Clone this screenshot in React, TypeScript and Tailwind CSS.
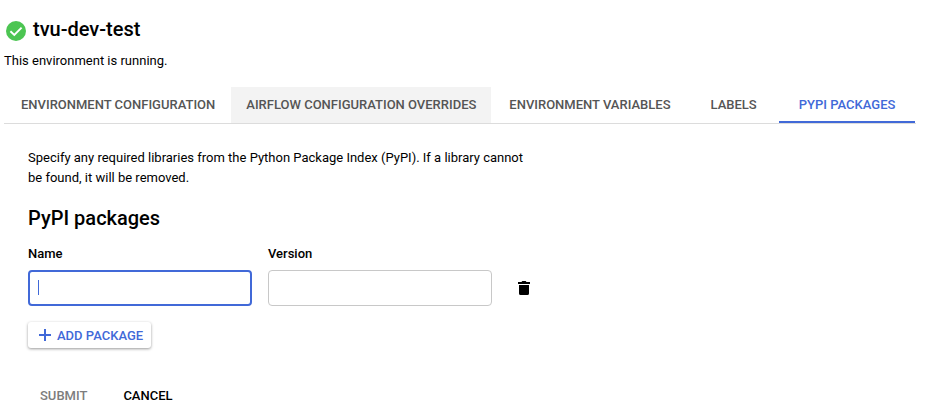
import { useState } from "react";

const tabs = [
  { label: "ENVIRONMENT CONFIGURATION", pad: "pl-[17px] pr-4" },
  { label: "AIRFLOW CONFIGURATION OVERRIDES", pad: "px-[15px]" },
  { label: "ENVIRONMENT VARIABLES", pad: "px-[18px]" },
  { label: "LABELS", pad: "px-[22px]" },
  { label: "PYPI PACKAGES", pad: "px-5" },
];

function Tabs() {
  const [active, setActive] = useState(4);
  return (
    <div role="tablist" className="mr-[13px] flex border-b border-[#dcdcdc]">
      {tabs.map((tab, i) => (
        <button
          key={tab.label}
          type="button"
          role="tab"
          aria-selected={i === active}
          onClick={() => setActive(i)}
          className={`h-9 whitespace-nowrap border-b-2 pt-px text-[13px] font-medium leading-[33px] ${tab.pad} ${
            i === active
              ? "border-[#4169d8] text-[#4169d8]"
              : i === 1
                ? "border-[#f3f3f3] bg-[#f3f3f3] text-[#555]"
                : "border-transparent text-[#555]"
          }`}
        >
          {tab.label}
        </button>
      ))}
    </div>
  );
}

export default function App() {
  const [name, setName] = useState("");
  const [version, setVersion] = useState("");
  return (
    <main className="bg-white pb-2 pl-1 pt-[15px] font-[Roboto,sans-serif] text-[13px] leading-5 text-black">
      <header>
        <h1 className="flex h-7 items-center gap-[5px] text-xl font-medium">
          <svg viewBox="0 0 24 24" className="mt-1 size-6" aria-hidden="true">
            <circle cx="12" cy="12" r="10" fill="#4cc552" />
            <path d="M6.4 12.3l3.9 3.7 7.3-7.4" fill="none" stroke="#fff" strokeWidth="1.9" />
          </svg>
          tvu-dev-test
        </h1>
        <p className="mt-2">This environment is running.</p>
      </header>
      <div className="mt-4">
        <Tabs />
      </div>
      <form className="ml-6 mt-6" onSubmit={(e) => e.preventDefault()}>
        <p className="max-w-[504px]">
          Specify any required libraries from the Python Package Index (PyPI). If a library cannot be found, it will be
          removed.
        </p>
        <h2 className="mt-4 text-xl font-medium leading-7">PyPI packages</h2>
        <div className="mt-3 flex items-end gap-4">
          <div className="w-56">
            <label htmlFor="name" className="block font-medium">
              Name
            </label>
            <div className="relative mt-[6px]">
              <input
                id="name"
                value={name}
                onChange={(e) => setName(e.target.value)}
                className="block h-9 w-full rounded border-2 border-[#4169d8] px-2 caret-[#4169d8] outline-none"
              />
              {name === "" && <span className="pointer-events-none absolute left-[10px] top-[10px] h-[15px] w-px bg-[#4169d8]" />}
            </div>
          </div>
          <div className="w-56">
            <label htmlFor="version" className="block font-medium">
              Version
            </label>
            <input
              id="version"
              value={version}
              onChange={(e) => setVersion(e.target.value)}
              className="mt-[6px] block h-9 w-full rounded border border-[#c8c8c8] px-2 outline-none"
            />
          </div>
          <button type="button" aria-label="Delete package" className="flex h-9 w-8 items-center justify-center">
            <svg viewBox="0 0 12 14" className="h-[14px] w-3" aria-hidden="true">
              <path d="M0 1h3.5l.8-1h3.4l.8 1H12v2H0zM1 4h10v8.4A1.6 1.6 0 0 1 9.4 14H2.6A1.6 1.6 0 0 1 1 12.4z" />
            </svg>
          </button>
        </div>
        <button
          type="button"
          className="mt-4 flex h-[26px] items-center gap-[6px] rounded-[3px] bg-white pl-[11px] pr-2 font-medium text-[#4169d8] shadow-[0_1px_3px_rgba(0,0,0,0.4)]"
        >
          <svg viewBox="0 0 12 12" className="size-3" aria-hidden="true">
            <path d="M6 0v12M0 6h12" fill="none" stroke="#4169d8" strokeWidth="2" />
          </svg>
          <span className="pt-px">ADD PACKAGE</span>
        </button>
        <div className="mt-[38px] flex gap-3 font-medium">
          <button type="submit" className="px-3 text-[#7d7d7d]">
            SUBMIT
          </button>
          <button type="button" className="px-3">
            CANCEL
          </button>
        </div>
      </form>
    </main>
  );
}
